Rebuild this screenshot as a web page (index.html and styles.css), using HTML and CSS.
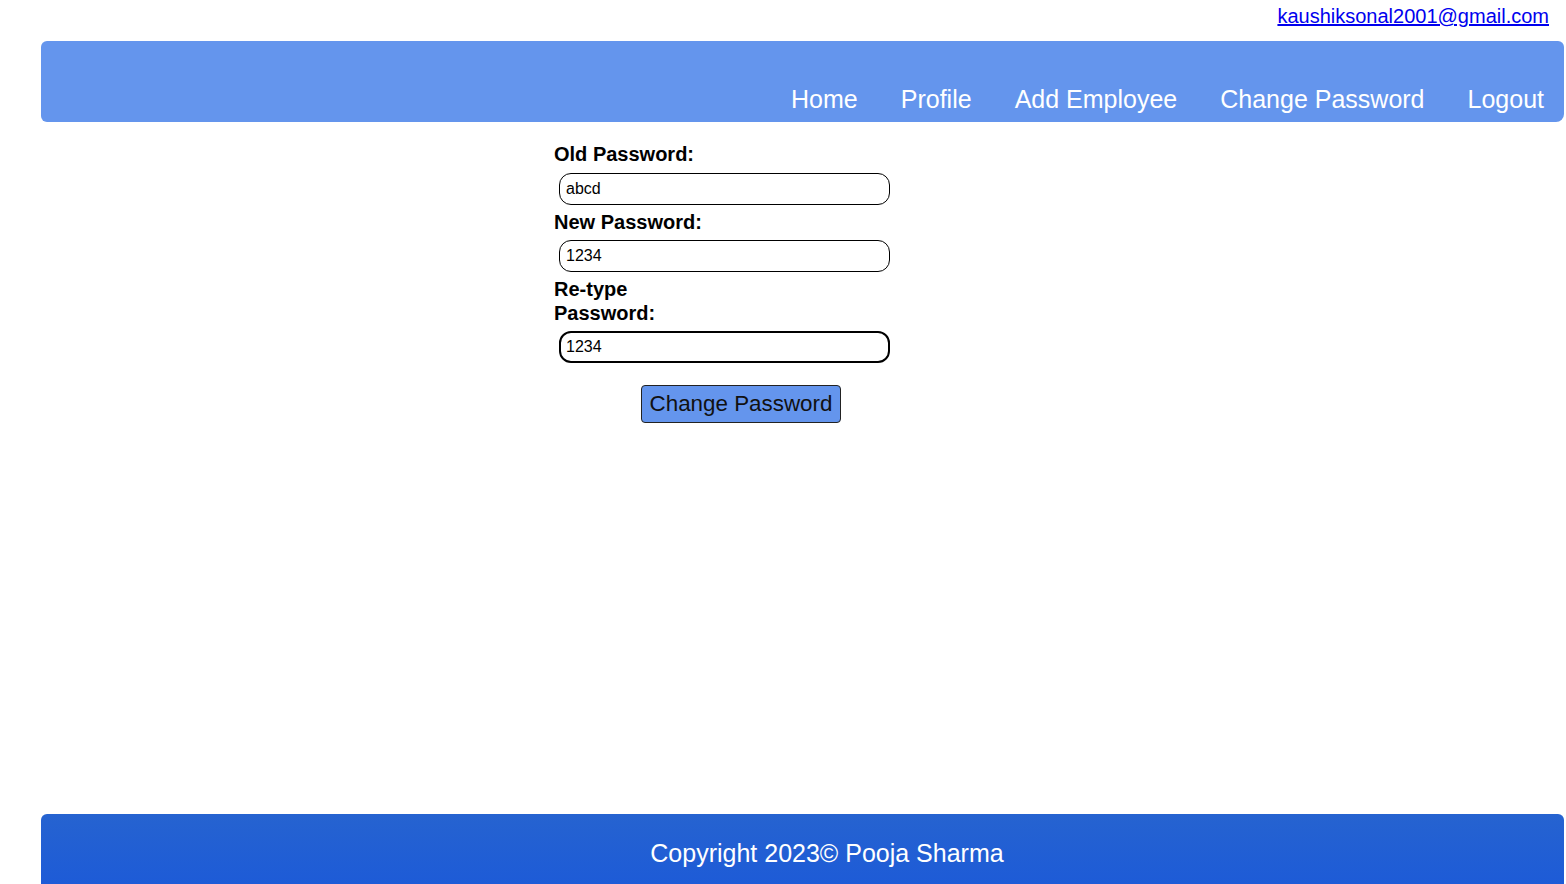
FILE: index.html
```html
<!DOCTYPE html>
<html>
<head>
<meta charset="utf-8">
<link rel="stylesheet" href="styles.css">
</head>
<body>
<div class="topline"><a href="#" class="email">kaushiksonal2001@gmail.com</a></div>
<nav class="navbar">
  <ul class="menu">
    <li>Home</li>
    <li>Profile</li>
    <li>Add Employee</li>
    <li>Change Password</li>
    <li>Logout</li>
  </ul>
</nav>
<main class="content">
  <form class="pwform">
    <label class="lbl">Old Password:</label>
    <input class="field" type="text" value="abcd">
    <label class="lbl">New Password:</label>
    <input class="field" type="text" value="1234">
    <label class="lbl">Re-type Password:</label>
    <input class="field focused" type="text" value="1234">
    <div class="btnrow"><button type="button" class="btn">Change Password</button></div>
  </form>
</main>
<footer class="footer">Copyright 2023© Pooja Sharma</footer>
</body>
</html>
```
FILE: styles.css
```css
html, body { margin: 0; padding: 0; }
body {
  font-family: "Liberation Sans", Arial, sans-serif;
  background: #fff;
  width: 1566px;
  height: 884px;
  overflow: hidden;
  position: relative;
}
.topline {
  height: 41px;
  display: flex;
  justify-content: flex-end;
  padding-right: 17px;
}
.email {
  font-size: 20px;
  color: #0000ee;
  text-decoration: underline;
  margin-top: 5px;
  line-height: 23px;
  height: 23px;
}
.navbar {
  margin-left: 41px;
  margin-right: 2px;
  height: 81px;
  background: #6495ed;
  border-radius: 6px 6px 8px 6px;
  display: flex;
  justify-content: flex-end;
  align-items: flex-end;
}
.menu {
  list-style: none;
  margin: 0;
  padding: 0 20px 9px 0;
  display: flex;
  gap: 43px;
}
.menu li {
  color: #fff;
  font-size: 25px;
  line-height: 28px;
}
.content {
  display: flex;
  padding-left: 554px;
  padding-top: 21px;
}
.pwform {
  display: flex;
  flex-direction: column;
  width: 374px;
}
.lbl {
  font-weight: bold;
  font-size: 20px;
  line-height: 23.5px;
  width: 150px;
  display: block;
}
.field {
  margin: 6px 0 6px 5px;
  width: 331px;
  height: 32px;
  box-sizing: border-box;
  border: 1px solid #000;
  border-radius: 12px;
  font-family: "Liberation Sans", Arial, sans-serif;
  font-size: 16px;
  padding: 0 6px;
  color: #000;
  background: #fff;
  outline: none;
}
.field.focused {
  border: 2px solid #000;
  padding: 0 5px;
}
.btnrow {
  display: flex;
  justify-content: center;
  padding-top: 16px;
}
.btn {
  width: 200px;
  height: 38px;
  background: #6495ed;
  border: 1px solid #222;
  border-radius: 4px;
  font-family: "Liberation Sans", Arial, sans-serif;
  font-size: 22.4px;
  color: #111;
  padding: 0;
}
.footer {
  position: absolute;
  left: 41px;
  right: 2px;
  top: 814px;
  height: 80px;
  background: linear-gradient(#2663d0, #1c5ad8);
  border-radius: 6px 6px 0 0;
  color: #fff;
  font-size: 25px;
  text-align: center;
  box-sizing: border-box;
  padding-top: 25px;
  padding-left: 49px;
  line-height: 28px;
}
```
